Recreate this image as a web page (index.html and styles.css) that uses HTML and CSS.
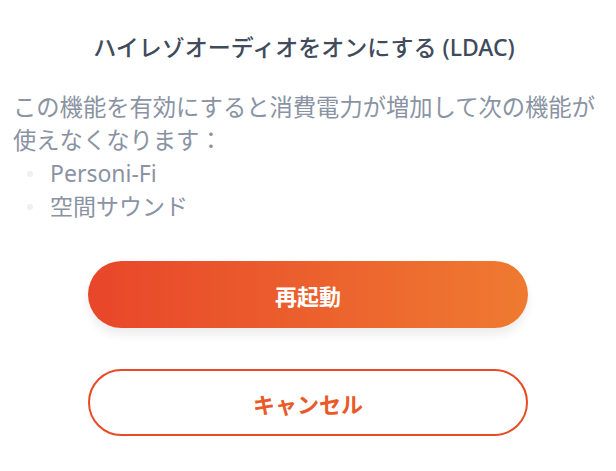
FILE: index.html
```html
<!DOCTYPE html>
<html lang="ja">
<head>
  <meta charset="UTF-8" />
  <meta name="viewport" content="width=device-width, initial-scale=1.0"/>
  <title>LDAC</title>
  <link rel="stylesheet" href="styles.css">
</head>
<body>
  <div class="dialog">
    <h1 class="title">ハイレゾオーディオをオンにする (LDAC)</h1>
    <p class="message">この機能を有効にすると消費電力が増加して次の機能が使えなくなります：</p>
    <ul class="features">
      <li>Personi-Fi</li>
      <li>空間サウンド</li>
    </ul>

    <div class="actions">
      <button class="btn btn-primary" type="button">再起動</button>
      <button class="btn btn-outline" type="button">キャンセル</button>
    </div>
  </div>
</body>
</html>
```

FILE: styles.css
```css
body {
  margin: 0;
  padding: 0;
  background: #ffffff;
  font-family: "Noto Sans", "Noto Sans CJK JP", sans-serif;
}
.dialog {
  padding: 33px 13px 0;
}
.title {
  margin: 0 8px 0 0;
  font-size: 23px;
  line-height: 28px;
  font-weight: 500;
  color: #404b5c;
  text-align: center;
}
.message {
  margin: 30px 0 0;
  font-size: 23.3px;
  line-height: 33px;
  color: #8a93a3;
}
.features {
  list-style: none;
  margin: 0;
  padding: 0;
}
.features li {
  display: flex;
  align-items: center;
  font-size: 23px;
  line-height: 33px;
  color: #8a93a3;
}
.features li::before {
  content: "";
  width: 6px;
  height: 6px;
  border-radius: 50%;
  background: #eef0f2;
  margin: 0 17px 0 14px;
}
.actions {
  display: flex;
  flex-direction: column;
  align-items: center;
  gap: 41px;
  margin-top: 38px;
}
.btn {
  width: 440px;
  height: 67px;
  border-radius: 34px;
  font-family: "Noto Sans", "Noto Sans CJK JP", sans-serif;
  font-size: 22px;
  font-weight: bold;
  cursor: pointer;
}
.btn-primary {
  border: none;
  color: #ffffff;
  background: linear-gradient(90deg, #e8462a, #ef7a31);
  box-shadow: 0 7px 10px rgba(0, 0, 0, 0.07);
}
.btn-outline {
  border: 2px solid #e84a25;
  background: #ffffff;
  color: #e95a28;
}
```
